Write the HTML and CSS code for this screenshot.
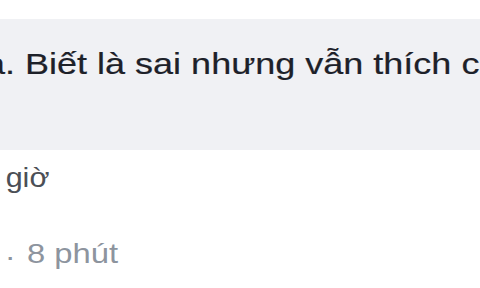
FILE: index.html
```html
<!DOCTYPE html>
<html lang="vi">
<head>
<meta charset="utf-8">
<link rel="stylesheet" href="styles.css">
</head>
<body>
<div class="page">
  <div class="bubble">
    <p class="comment">a. Biết là sai nhưng vẫn thích c</p>
  </div>
  <div class="meta">giờ</div>
  <div class="actions"><span class="sep">·</span> 8 phút</div>
</div>
</body>
</html>
```
FILE: styles.css
```css
html, body {
  margin: 0;
  padding: 0;
  background: #ffffff;
}
.page {
  width: 480px;
  height: 288px;
  overflow: hidden;
  padding-top: 19px;
  box-sizing: border-box;
  font-family: "Liberation Sans", Arial, sans-serif;
}
.bubble {
  background: #f0f1f4;
  height: 131px;
  box-sizing: border-box;
  padding-top: 27px;
  overflow: hidden;
}
.comment {
  margin: 0 0 0 -14.7px;
  font-size: 30px;
  line-height: 36px;
  color: #1d2129;
  white-space: nowrap;
  transform: scaleX(1.2);
  transform-origin: 0 0;
  -webkit-text-stroke: 0.2px #1d2129;
}
.meta {
  margin-top: 11px;
  padding-left: 5px;
  font-size: 27px;
  line-height: 34px;
  color: #4b4f56;
  transform: scaleX(1.13);
  transform-origin: 0 0;
}
.actions {
  margin-top: 42px;
  padding-left: 4px;
  font-size: 28px;
  line-height: 34px;
  color: #8d949e;
  white-space: nowrap;
  transform: scaleX(1.17);
  transform-origin: 0 0;
}
.sep {
  display: inline-block;
  margin-right: 2px;
  vertical-align: -3px;
}
```
